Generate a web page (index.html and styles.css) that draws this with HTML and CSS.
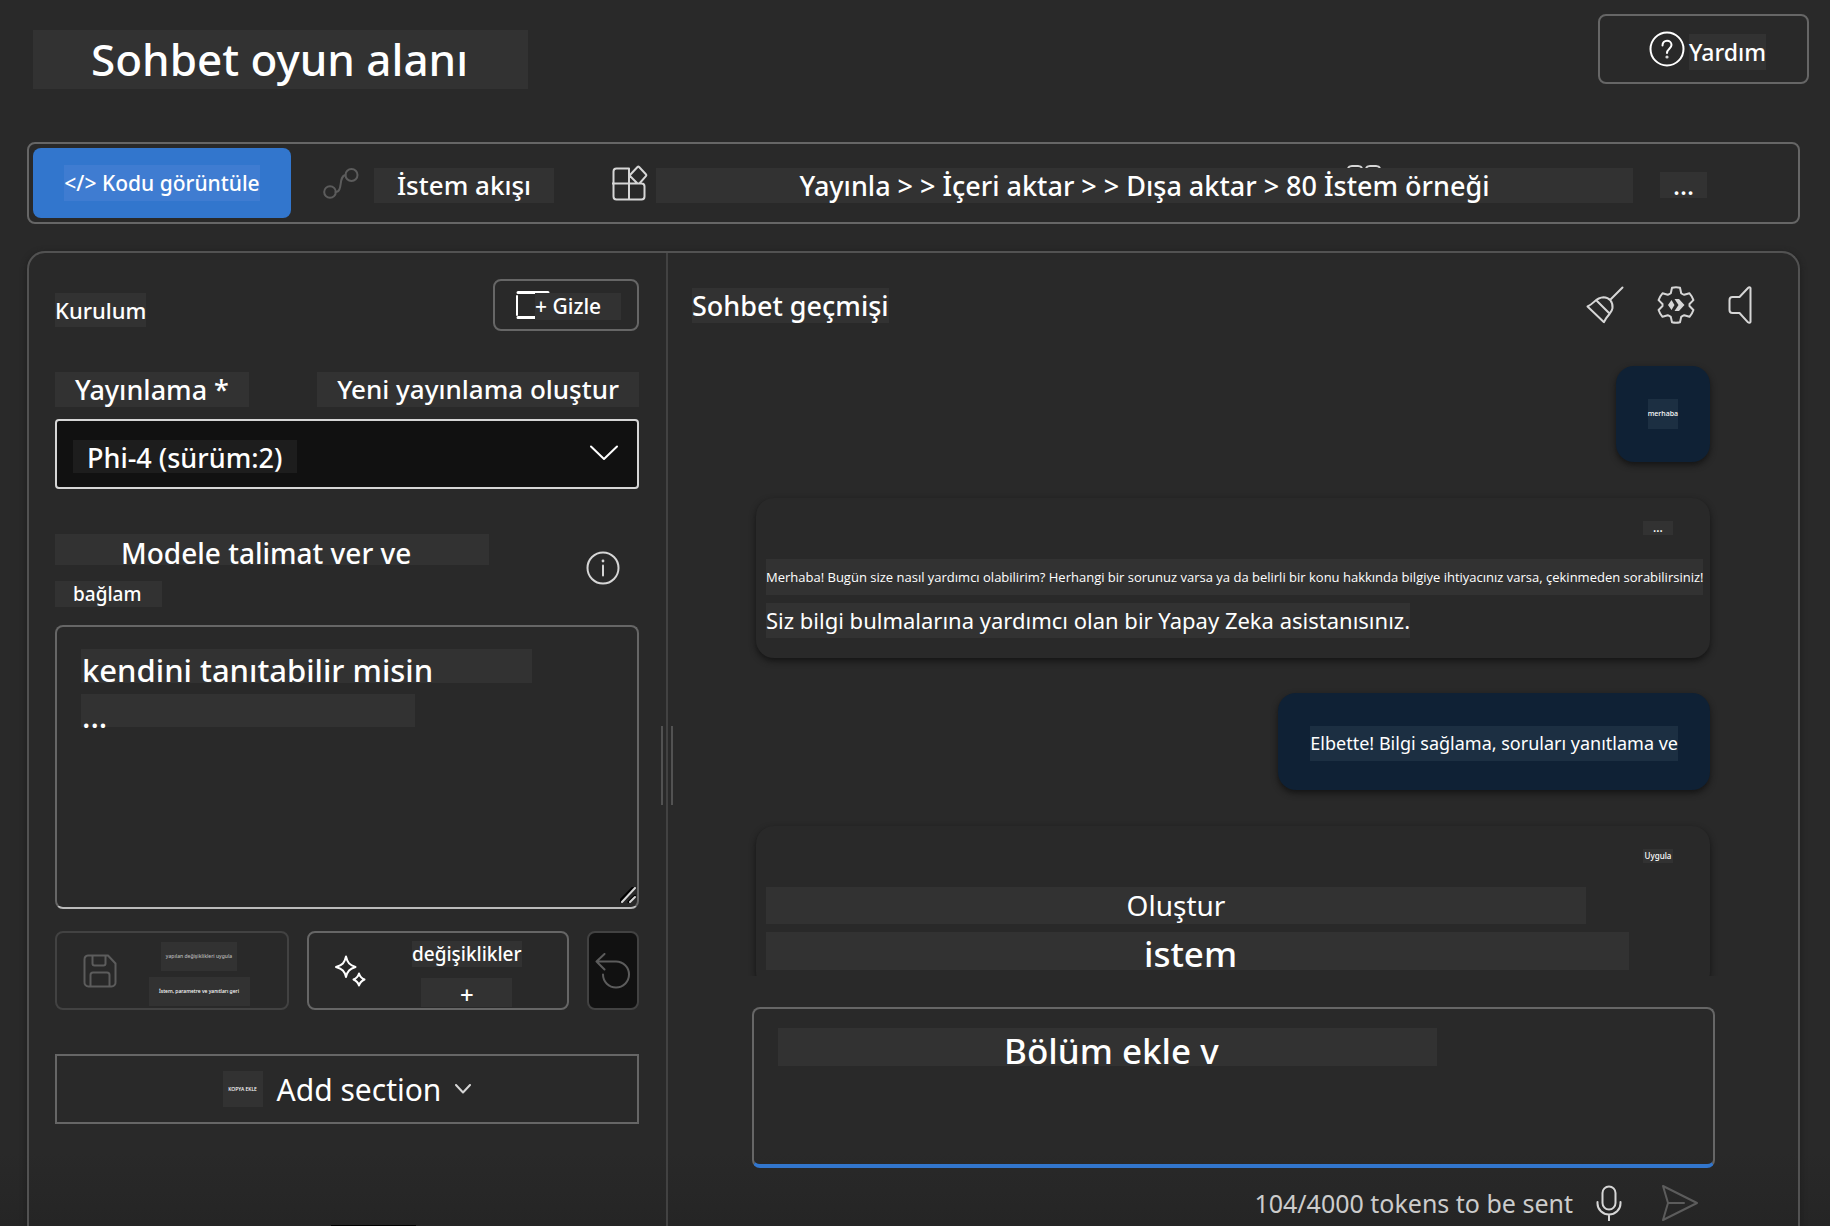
FILE: index.html
```html
<!DOCTYPE html>
<html lang="tr">
<head>
<meta charset="utf-8">
<meta name="viewport" content="width=device-width, initial-scale=1">
<title>Sohbet oyun alanı</title>
<link rel="stylesheet" href="styles.css">
</head>
<body>
<header class="page-header">
  <h1 class="chip title">Sohbet oyun alanı</h1>
  <button class="outline-btn help-btn" type="button">
    <svg class="icon" width="36" height="36" viewBox="0 0 36 36"><circle cx="18" cy="18" r="16.5"/><path d="M13.5 14.500c0-3 2-4.800 4.500-4.800s4.500 1.800 4.500 4.300c0 3.500-4.500 4-4.500 8"/><circle class="solid" cx="18" cy="26" r="1.600"/></svg>
    <span class="chip text-md">Yardım</span>
  </button>
</header>

<nav class="toolbar">
  <button class="primary-btn" type="button"><span class="chip on-blue text-sm">&lt;/&gt; Kodu görüntüle</span></button>
  <button class="tool flow" type="button">
    <svg class="icon dim" width="36" height="36" viewBox="0 0 36 36"><circle cx="7" cy="27" r="5.800"/><circle cx="28.500" cy="10" r="6"/><path d="M12.500 27c8 0 2.500-16 10-17"/></svg>
    <span class="chip text-lg">İstem akışı</span>
  </button>
  <button class="tool publish" type="button">
    <svg class="icon soft" width="36" height="36" viewBox="0 0 36 36"><path d="M17 3.500H4.500a3 3 0 0 0-3 3v25a3 3 0 0 0 3 3h25a3 3 0 0 0 3-3v-10a3 3 0 0 0-3-3h-31M17 3.500v31M25.500 18.500l-8-8 8-8.500q.8-.8 1.600 0l6.800 7.300q.8.900 0 1.800l-6.500 7.400z"/></svg>
    <span class="chip text-xl">Yayınla &gt; &gt; İçeri aktar &gt; &gt; Dışa aktar &gt; 80 İstem örneği
      <svg class="peek" width="34" height="3" viewBox="0 0 34 3"><path d="M1 3q1-2 4-2h6q3 0 4 2M19 3q1-2 4-2h6q3 0 4 2"/></svg></span>
  </button>
  <button class="tool more" type="button" aria-label="Diğer"><span class="chip text-lg">...</span></button>
</nav>

<main class="panel">
  <section class="setup">
    <div class="setup-head">
      <h2 class="chip">Kurulum</h2>
      <button class="outline-btn hide-btn" type="button">
        <svg class="icon" width="34" height="28" viewBox="0 0 34 28"><path d="M1 24V5"/><path class="thick" d="M2 1.500h30M2 26.500h30"/></svg>
        <span class="chip text-sm">+ Gizle</span>
      </button>
    </div>

    <div class="label-row">
      <label class="chip text-xl" for="deployment">Yayınlama *</label>
      <a class="chip text-lg" href="#new">Yeni yayınlama oluştur</a>
    </div>
    <div class="select-wrap">
      <select id="deployment"><option>Phi-4 (sürüm:2)</option></select>
      <svg class="icon" width="28" height="16" viewBox="0 0 28 16"><path d="M1 1.500l13 12.500 13-12.500"/></svg>
    </div>

    <div class="instruction-row">
      <label for="instructions">
        <span class="chip line-one">Modele talimat ver ve</span>
        <span class="chip line-two">bağlam</span>
      </label>
      <svg class="icon soft" width="34" height="34" viewBox="0 0 34 34"><circle cx="17" cy="17" r="15.500"/><path d="M17 14.500v10"/><circle class="solid" cx="17" cy="10" r="1.400"/></svg>
    </div>
    <div class="textarea-wrap">
      <textarea id="instructions" spellcheck="false">kendini tanıtabilir misin
...</textarea>
      <svg class="icon soft" width="16" height="16" viewBox="0 0 16 16"><path class="shade" d="M0 14L14 0M9 15l6-6"/><path d="M2 15L15 1M10 15l5-5"/></svg>
    </div>

    <div class="actions">
      <button class="outline-btn save-btn" type="button" disabled>
        <svg class="icon dim" width="34" height="34" viewBox="0 0 34 34"><path d="M5 1.500h20l7.500 8V28a4 4 0 0 1-4 4.500h-23A4 4 0 0 1 1.500 28V5.500a4 4 0 0 1 3.500-4zM9.500 1.500v8a2 2 0 0 0 2 2h9a2 2 0 0 0 2-2v-8M7.500 32.500V21a2.500 2.500 0 0 1 2.500-2.500h14a2.500 2.500 0 0 1 2.500 2.500v11.500"/></svg>
        <span class="stack"><span class="chip micro">yapılan değişiklikleri uygula</span><span class="chip micro bright">İstem, parametre ve yanıtları geri</span></span>
      </button>
      <button class="outline-btn generate-btn" type="button">
        <svg class="icon" width="32" height="32" viewBox="0 0 32 32"><path d="M12 1.500c1.500 6.500 3.500 8.500 9.500 10.500-6 2-8 4-9.500 10-1.500-6-3.500-8-10-10 6.500-2 8.500-4 10-10.500zM25 18.500c1 3.500 2 4.500 5.500 6-3.500 1.500-4.500 2.500-5.500 6-1-3.500-2-4.500-5.500-6 3.500-1.500 4.500-2.500 5.500-6z"/></svg>
        <span class="stack"><span class="chip word">değişiklikler</span><span class="chip plus">+</span></span>
      </button>
      <button class="outline-btn undo-btn" type="button" aria-label="Geri al" disabled>
        <svg class="icon dim" width="36" height="36" viewBox="0 0 36 36"><path d="M9.500 1L1.500 8.500l8 8M1.500 8.500H21a13 13 0 1 1-13 13"/></svg>
      </button>
    </div>

    <button class="add-btn" type="button">
      <span class="chip micro">KOPYA EKLE</span>
      <span>Add section</span>
      <svg class="icon soft" width="16" height="10" viewBox="0 0 16 10"><path d="M1 1l7 7.500L15 1"/></svg>
    </button>
    <div class="dock"></div>
    <div class="grip"></div>
  </section>

  <section class="chat">
    <div class="chat-head">
      <h2 class="chip text-xl">Sohbet geçmişi</h2>
      <div class="chat-tools">
        <button type="button" aria-label="Temizle"><svg class="icon soft" width="38" height="38" viewBox="0 0 38 38"><path d="M36.500 1.500L24 14M1.500 20.500c7-3 8-9 16-9.300 6 0 9.500 5 9 11-.4 5-5 6-8.500 14zM11 15l12.500 12.500"/></svg></button>
        <button type="button" aria-label="Ayarlar"><svg class="icon soft" width="38" height="38" viewBox="0 0 38 38"><path d="M15 1.800q4-1 8 0l1.200 5.400q1.500 1.200 3 1.600l5.300-1.500q2.700 3 3.900 6.800L32.500 18v2l3.900 4q-1.200 3.800-3.900 6.800l-5.300-1.500q-1.500.5-3 1.600L23 36.200q-4 1-8 0l-1.200-5.300q-1.500-1.200-3-1.600l-5.300 1.500q-2.700-3-3.900-6.800l3.900-4v-2l-3.900-3.900q1.200-3.800 3.900-6.800l5.300 1.500q1.500-.5 3-1.600z"/><path class="solid" d="M17.500 13H22l5.500 6-5.500 6h-4.500l4-6zM14.500 14l3 5-3 5-3.500-5z"/></svg></button>
        <button type="button" aria-label="Ses"><svg class="icon soft" width="24" height="38" viewBox="0 0 24 38"><path d="M22.500 2v34q-1 1.500-2.500.3L11.500 27H4.500a3 3 0 0 1-3-3V14a3 3 0 0 1 3-3h7L20 2q1.500-1.500 2.500 0z"/></svg></button>
      </div>
    </div>

    <div class="messages">
      <article class="bubble hello"><span class="chip on-navy">merhaba</span></article>
      <article class="card">
        <span class="chip tag dots">...</span>
        <p class="chip small">Merhaba! Bugün size nasıl yardımcı olabilirim? Herhangi bir sorunuz varsa ya da belirli bir konu hakkında bilgiye ihtiyacınız varsa, çekinmeden sorabilirsiniz!</p>
        <p class="chip large">Siz bilgi bulmalarına yardımcı olan bir Yapay Zeka asistanısınız.</p>
      </article>
      <article class="bubble"><span class="chip on-navy">Elbette! Bilgi sağlama, soruları yanıtlama ve</span></article>
      <article class="card second">
        <span class="chip tag">Uygula</span>
        <p class="chip create">Oluştur</p>
        <p class="chip prompt">istem</p>
      </article>
    </div>

    <form class="composer">
      <textarea aria-label="İleti" spellcheck="false">Bölüm ekle v</textarea>
      <div class="composer-foot">
        <span>104/4000 tokens to be sent</span>
        <button type="button" aria-label="Mikrofon"><svg class="icon soft" width="26" height="36" viewBox="0 0 26 36"><rect x="6.500" y="1.500" width="13" height="23" rx="6.500"/><path d="M1.500 17v1.500a11.500 11 0 0 0 23 0V17M13 29.500V36"/></svg></button>
        <button type="button" aria-label="Gönder"><svg class="icon dim" width="38" height="38" viewBox="0 0 38 38"><path d="M2 2l34 17L2 36l5-17zM7 19h16"/></svg></button>
      </div>
    </form>
  </section>
</main>
</body>
</html>
```

FILE: styles.css
```css
* { box-sizing: border-box; }

body {
  margin: 0;
  height: 100vh;
  overflow: hidden;
  display: flex;
  flex-direction: column;
  background: linear-gradient(#292929 94%, #252525);
  color: #fff;
  font-family: "Noto Sans", "Open Sans", sans-serif;
  font-size: 26px;
}

h1, h2, p { margin: 0; font-weight: 400; }
button, select, textarea { font: inherit; color: inherit; background: none; border: 0; padding: 0; margin: 0; }
a { color: inherit; text-decoration: none; }
svg { display: block; flex: none; }

.icon { fill: none; stroke: #fff; stroke-width: 2; stroke-linecap: round; stroke-linejoin: round; }
.icon.soft { stroke: #d6d6d6; }
.icon.dim { stroke: #5c5c5c; }
.icon .solid { fill: #d6d6d6; stroke: none; }
.icon .thick { stroke-width: 3; }
.icon .shade { stroke: #000; stroke-width: 3; }

/* Text on a slightly lighter block */
.chip { display: block; background: #323232; white-space: nowrap; font-weight: 500; }
.chip.on-blue { background: #3f7cd1; }
.chip.on-navy { background: #1c2f42; }
.text-sm { font-size: 21px; line-height: 36px; }
.text-md { font-size: 23px; line-height: 36px; }
.text-lg { font-size: 26px; line-height: 35px; }
.text-xl { font-size: 27px; line-height: 35px; }

.outline-btn {
  display: flex;
  align-items: center;
  justify-content: center;
  border: 2px solid #666;
  border-radius: 8px;
}
.outline-btn:disabled { border-color: #424242; }

/* Header */
.page-header {
  display: flex;
  align-items: flex-start;
  justify-content: space-between;
  padding: 14px 21px 0 33px;
  height: 142px;
  flex: none;
}
.title { width: 495px; margin-top: 16px; padding-left: 58px; font-size: 44px; line-height: 59px; }
.help-btn { width: 211px; height: 70px; gap: 4px; padding-left: 8px; }
.help-btn .chip { margin-top: 6px; }

/* Toolbar */
.toolbar {
  display: flex;
  align-items: center;
  flex: none;
  margin: 0 30px 27px 27px;
  padding: 4px 91px 4px 4px;
  border: 2px solid #666;
  border-radius: 8px;
}
.primary-btn {
  display: flex;
  align-items: center;
  justify-content: center;
  width: 258px;
  height: 70px;
  border-radius: 8px;
  background: #3276cd;
}
.tool { display: flex; align-items: center; }
.tool .chip { margin-top: 4px; }
.flow { gap: 15px; margin-left: 32px; }
.flow .chip { width: 180px; text-align: center; }
.publish { flex: 1; gap: 8px; margin: 0 27px 0 58px; }
.publish .chip { flex: 1; position: relative; text-align: center; }
.peek { position: absolute; right: 252px; top: -3px; fill: none; stroke: #d6d6d6; stroke-width: 2; }
.more .chip { width: 47px; line-height: 26px; text-align: center; }

/* Main panel */
.panel {
  flex: 1;
  min-height: 0;
  display: flex;
  margin: 0 30px 0 27px;
  border: 2px solid #525252;
  border-bottom: 0;
  border-radius: 18px 18px 0 0;
  box-shadow: 0 2px 6px #1c1c1c;
}

/* Setup column */
.setup {
  position: relative;
  display: flex;
  flex-direction: column;
  flex: none;
  width: 639px;
  padding: 26px 27px 0 26px;
  border-right: 2px solid #424242;
}
.setup-head { display: flex; align-items: center; justify-content: space-between; }
.setup-head h2 { margin-top: 10px; font-size: 22px; line-height: 34px; }
.hide-btn { width: 146px; height: 52px; padding-left: 5px; }
.hide-btn .chip { width: 86px; margin: 2px 0 0 -15px; line-height: 27px; text-align: left; }
.label-row { display: flex; justify-content: space-between; margin: 41px 0 12px; }
.label-row .chip { padding: 0 20px; }
.select-wrap, .textarea-wrap { display: grid; }
.select-wrap > *, .textarea-wrap > * { grid-area: 1 / 1; }
.select-wrap .icon { place-self: center end; margin: 0 21px 2px 0; }
select {
  appearance: none;
  height: 70px;
  padding: 7px 60px 0 30px;
  border: 2px solid #d6d6d6;
  border-radius: 4px;
  font-size: 27px;
  font-weight: 500;
  background: linear-gradient(#1d1d1d, #1d1d1d) 16px 19px / 224px 33px no-repeat #111;
}
.instruction-row { display: flex; align-items: flex-start; justify-content: space-between; margin: 45px 19px 18px 0; }
.instruction-row .icon { margin-top: 17px; }
.line-one { width: 434px; height: 31px; padding-left: 66px; font-size: 28px; line-height: 38px; }
.line-two { width: 107px; margin-top: 16px; padding-left: 18px; font-size: 19px; line-height: 26px; }
.textarea-wrap textarea {
  height: 284px;
  padding: 20px 25px;
  border: 2px solid #666;
  border-bottom-color: #bbb;
  border-radius: 8px;
  resize: none;
  font-size: 31px;
  font-weight: 500;
  line-height: 46px;
  background:
    linear-gradient(#323232, #323232) 24px 22px / 451px 34px no-repeat,
    linear-gradient(#323232, #323232) 24px 67px / 334px 33px no-repeat;
}
.textarea-wrap .icon { place-self: end; margin: 0 3px 6px 0; }

.actions { display: flex; gap: 18px; margin: 22px 0 44px; }
.actions .outline-btn { height: 79px; }
.stack { display: flex; flex-direction: column; align-items: center; padding-top: 6px; }
.chip.micro { font-size: 5px; line-height: 29px; color: #bbb; }
.chip.micro.bright { color: #fff; }
.save-btn { width: 234px; gap: 32px; padding-right: 12px; }
.save-btn .stack { gap: 6px; width: 101px; }
.save-btn .micro { width: 76px; text-align: center; }
.save-btn .bright { width: 101px; }
.outline-btn.generate-btn { width: 262px; gap: 46px; padding-left: 25px; justify-content: flex-start; }
.generate-btn .stack { gap: 11px; }
.word { font-size: 19px; line-height: 26px; }
.plus { width: 91px; height: 29px; font-size: 24px; line-height: 34px; }
.undo-btn { width: 52px; background: #111; }

.add-btn {
  display: flex;
  align-items: center;
  justify-content: center;
  gap: 14px;
  height: 70px;
  border: 2px solid #666;
  font-size: 30px;
}
.add-btn .micro { width: 40px; line-height: 36px; color: #fff; }
.dock { width: 85px; height: 1px; margin: auto auto 0 276px; background: #000; }
.grip {
  position: absolute;
  top: 473px;
  right: -7px;
  width: 12px;
  height: 79px;
  border: solid #525252;
  border-width: 0 2px;
}

/* Chat column */
.chat { flex: 1; min-width: 0; display: flex; flex-direction: column; }
.chat-head { display: flex; align-items: center; justify-content: space-between; padding: 33px 46px 0 24px; }
.chat-tools { display: flex; gap: 33px; }
.messages {
  flex: 1;
  min-height: 0;
  overflow: hidden;
  display: flex;
  flex-direction: column;
  padding: 42px 88px 0 88px;
}
.bubble, .card { flex: none; border-radius: 18px; box-shadow: 0 3px 6px #141414; }
.bubble {
  align-self: flex-end;
  display: flex;
  align-items: center;
  height: 97px;
  padding: 4px 32px 0;
  background: #0f2135;
  font-size: 18px;
  line-height: 35px;
}
.bubble .chip { font-weight: 400; }
.bubble.hello { height: 96px; padding-top: 0; font-size: 7px; line-height: 30px; }
.bubble.hello .chip { font-weight: 500; }
.card { display: flex; flex-direction: column; align-items: flex-start; margin: 36px 0 35px; padding: 23px 10px 20px; background: #292929; }
.tag { align-self: flex-end; width: 30px; height: 14px; margin-right: 27px; font-size: 8px; line-height: 14px; text-align: center; }
.dots { font-size: 12px; }
.small { margin-top: 24px; font-family: "Open Sans", sans-serif; font-size: 13px; font-weight: 400; line-height: 36px; }
.large { margin-top: 8px; font-size: 22px; font-weight: 400; line-height: 35px; }
.create { width: 820px; margin-top: 24px; font-size: 28px; font-weight: 400; line-height: 37px; text-align: center; }
.prompt { width: 863px; height: 38px; margin-top: 8px; padding-right: 14px; font-size: 35px; line-height: 44px; text-align: center; }

.composer { flex: none; padding: 31px 83px 0 84px; }
.composer textarea {
  display: block;
  width: 100%;
  height: 161px;
  padding: 18px 24px 19px 250px;
  border: 2px solid #666;
  border-bottom: 4px solid #3276cd;
  border-radius: 8px;
  resize: none;
  font-size: 35px;
  font-weight: 500;
  line-height: 48px;
  background: linear-gradient(#323232, #323232) 24px 19px / 659px 38px no-repeat;
}
.composer-foot {
  display: flex;
  align-items: center;
  justify-content: flex-end;
  height: 58px;
  padding: 12px 16px 0 0;
  color: #ccc;
  font-size: 25px;
}
.composer-foot button { margin-left: 23px; }
.composer-foot button + button { margin-left: 39px; }
```
